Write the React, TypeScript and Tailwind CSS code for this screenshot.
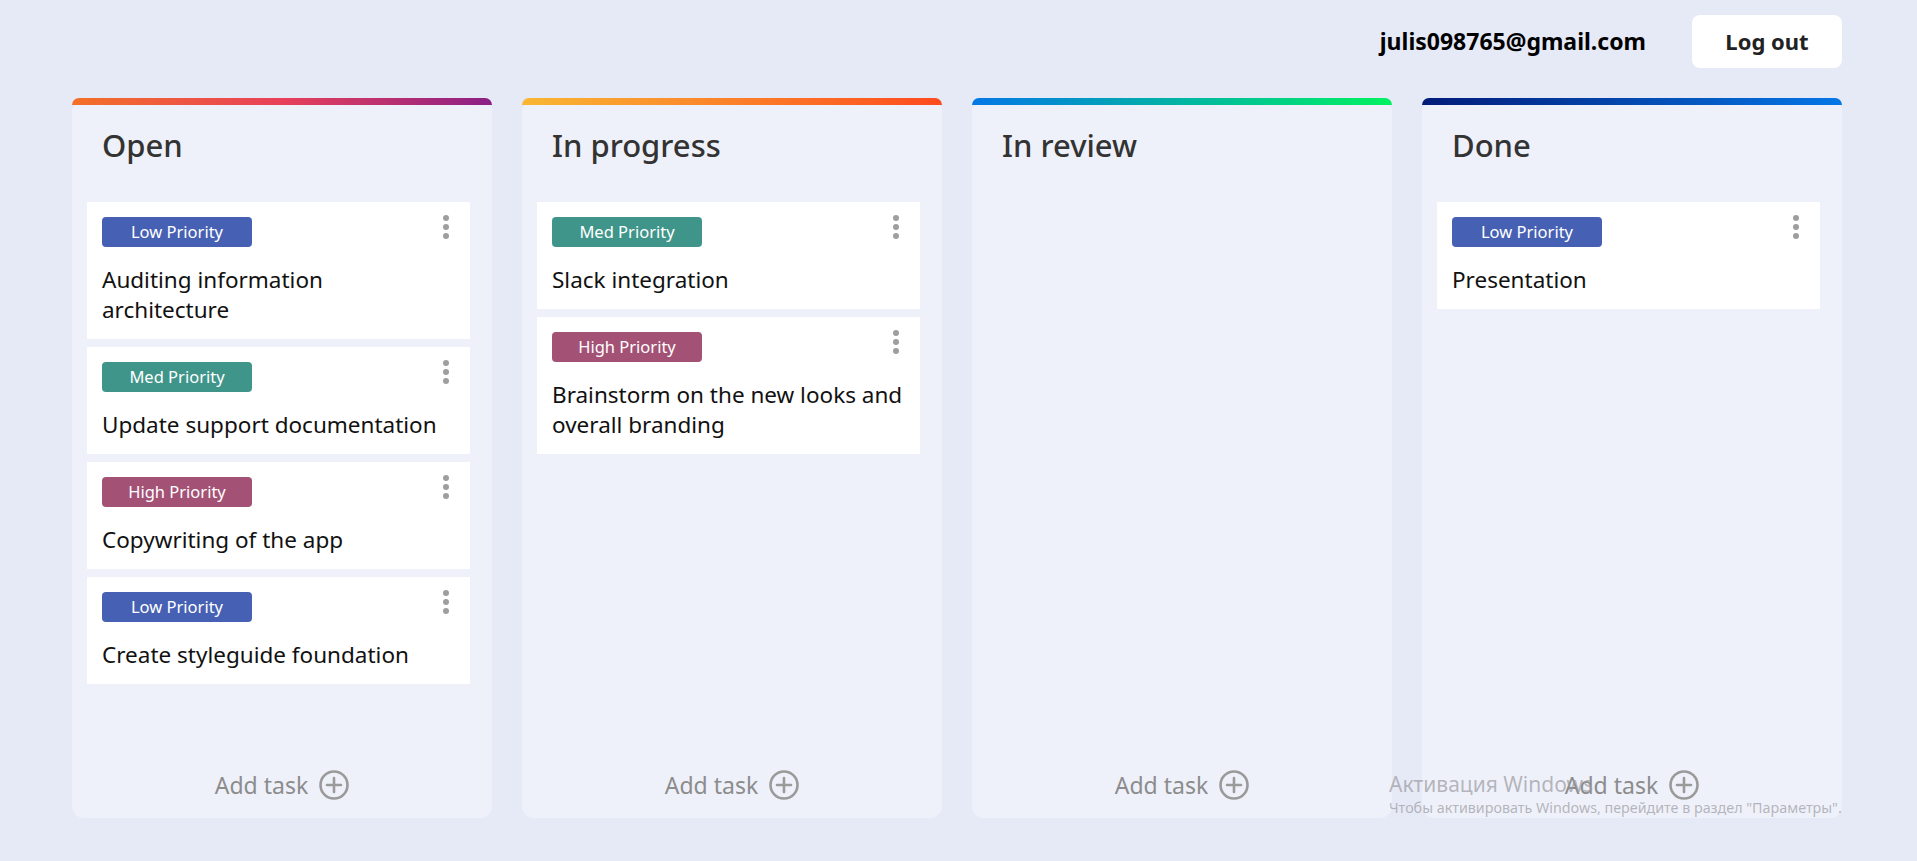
import React from 'react';

type Priority = 'Low' | 'Med' | 'High';

interface Task {
  id: number;
  priority: Priority;
  title: string;
}

interface Column {
  name: string;
  bar: string;
  tasks: Task[];
}

const PRIORITY_STYLES: Record<Priority, string> = {
  Low: 'bg-[#4660b4]',
  Med: 'bg-[#40958a]',
  High: 'bg-[#a35174]',
};

// titles keep the line breaks of the original board
const COLUMNS: Column[] = [
  {
    name: 'Open',
    bar: 'bg-[linear-gradient(to_right,#f47026,#e8405a_50%,#8b1f86)]',
    tasks: [
      { id: 1, priority: 'Low', title: 'Auditing information\narchitecture' },
      { id: 2, priority: 'Med', title: 'Update support documentation' },
      { id: 3, priority: 'High', title: 'Copywriting of the app' },
      { id: 4, priority: 'Low', title: 'Create styleguide foundation' },
    ],
  },
  {
    name: 'In progress',
    bar: 'bg-[linear-gradient(to_right,#f9b733,#fe4a1f)]',
    tasks: [
      { id: 5, priority: 'Med', title: 'Slack integration' },
      { id: 6, priority: 'High', title: 'Brainstorm on the new looks and\noverall branding' },
    ],
  },
  {
    name: 'In review',
    bar: 'bg-[linear-gradient(to_right,#0577e6,#00f260)]',
    tasks: [],
  },
  {
    name: 'Done',
    bar: 'bg-[linear-gradient(to_right,#021b79,#0577e6)]',
    tasks: [{ id: 7, priority: 'Low', title: 'Presentation' }],
  },
];

function Dots() {
  return (
    <button className="flex flex-col gap-[3px] -mt-[2px] mr-[21px]">
      <span className="w-[6px] h-[6px] rounded-full bg-[#9e9e9e]" />
      <span className="w-[6px] h-[6px] rounded-full bg-[#9e9e9e]" />
      <span className="w-[6px] h-[6px] rounded-full bg-[#9e9e9e]" />
    </button>
  );
}

function PlusCircle() {
  return (
    <svg width="30" height="30" viewBox="0 0 30 30" fill="none" stroke="#9a9a9a" strokeWidth="2.6" strokeLinecap="round">
      <circle cx="15" cy="15" r="13.5" />
      <line x1="8" y1="15" x2="22" y2="15" />
      <line x1="15" y1="8" x2="15" y2="22" />
    </svg>
  );
}

function TaskCard({ task }: { task: Task }) {
  return (
    <div className="bg-white pt-[15px] pb-[14px] pl-[15px]">
      <div className="flex items-start justify-between">
        <span
          className={`${PRIORITY_STYLES[task.priority]} w-[150px] h-[30px] rounded-[4px] flex items-center justify-center text-white text-[16.5px]`}
        >
          {task.priority} Priority
        </span>
        <Dots />
      </div>
      <p className="mt-[18px] pr-[8px] text-[22.5px] leading-[30px] text-[#111] whitespace-pre-line">{task.title}</p>
    </div>
  );
}

function BoardColumn({ column }: { column: Column }) {
  return (
    <div className="flex flex-col h-[720px]">
      <div className={`h-[7px] rounded-t-[8px] ${column.bar}`} />
      <div className="flex flex-col flex-1 bg-[#eff1fa] rounded-b-[12px] rounded-t-[5px]">
        <h2 className="pt-[18px] pl-[30px] text-[31px] leading-[44px] font-medium text-[#333]">{column.name}</h2>
        <div className="flex flex-col gap-[8px] mt-[35px] pl-[15px] pr-[22px] flex-1">
          {column.tasks.map((t) => (
            <TaskCard key={t.id} task={t} />
          ))}
        </div>
        <button className="h-[66px] flex items-center justify-center gap-[11px] text-[23px] text-[#8c8c8c]">
          <span>Add task</span>
          <PlusCircle />
        </button>
      </div>
    </div>
  );
}

export default function App() {
  return (
    <div
      className="relative min-h-[861px] bg-[#e6e9f6]"
      style={{ fontFamily: '"Noto Sans", "Open Sans", sans-serif' }}
    >
      <header className="flex items-center justify-end gap-[46px] pt-[15px] pr-[75px]">
        <span className="text-[23px] font-bold text-black">julis098765@gmail.com</span>
        <button className="w-[150px] h-[53px] rounded-[8px] bg-white text-[22px] font-bold text-[#222]">
          Log out
        </button>
      </header>

      <main className="grid grid-cols-[repeat(4,420px)] gap-[30px] pl-[72px] mt-[30px]">
        {COLUMNS.map((c) => (
          <BoardColumn key={c.name} column={c} />
        ))}
      </main>

      <div className="absolute left-[1389px] top-[770px] pointer-events-none text-[#9a9aa0]/70">
        <p className="text-[21px] leading-[28px]">Активация Windows</p>
        <p className="text-[14.3px] leading-[20px]">Чтобы активировать Windows, перейдите в раздел "Параметры".</p>
      </div>
    </div>
  );
}
